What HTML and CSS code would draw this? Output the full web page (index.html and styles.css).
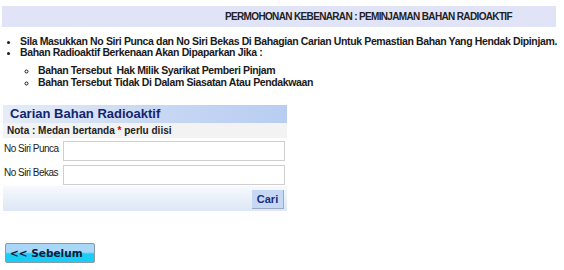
FILE: index.html
```html
<!DOCTYPE html>
<html lang="ms">
<head>
  <meta charset="UTF-8" />
  <title>Permohonan Kebenaran</title>
  <link rel="stylesheet" href="styles.css">
</head>
<body>

<div class="page-title">PERMOHONAN KEBENARAN : PEMINJAMAN BAHAN RADIOAKTIF</div>

<ul class="info">
  <li>Sila Masukkan No Siri Punca dan No Siri Bekas Di Bahagian Carian Untuk Pemastian Bahan Yang Hendak Dipinjam.</li>
  <li>Bahan Radioaktif Berkenaan Akan Dipaparkan Jika :
    <ul>
      <li>Bahan Tersebut&nbsp; Hak Milik Syarikat Pemberi Pinjam</li>
      <li>Bahan Tersebut Tidak Di Dalam Siasatan Atau Pendakwaan</li>
    </ul>
  </li>
</ul>

<div class="panel">
  <div class="panel-title">Carian Bahan Radioaktif</div>
  <div class="panel-note">Nota : Medan bertanda <span class="req">*</span> perlu diisi</div>
  <div class="field">
    <label for="punca">No Siri Punca</label>
    <input type="text" id="punca" />
  </div>
  <div class="field">
    <label for="bekas">No Siri Bekas</label>
    <input type="text" id="bekas" />
  </div>
  <div class="panel-foot">
    <button class="btn-cari">Cari</button>
  </div>
</div>

<button class="btn-back">&lt;&lt; Sebelum</button>

</body>
</html>
```

FILE: styles.css
```css
body {
  margin: 0;
  padding: 6px 8px 0 2px;
  background: #fff;
  color: #1a1a1a;
  font-family: 'Liberation Sans', Arial, sans-serif;
  font-size: 11px;
}
.page-title {
  width: 554px;
  height: 21px;
  line-height: 21px;
  padding-left: 223px;
  box-sizing: border-box;
  background: #e1e3f6;
  font-size: 10px;
  font-weight: bold;
  letter-spacing: -0.65px;
  color: #222;
  white-space: nowrap;
}
.info {
  margin: 9px 0 0 0;
  padding: 0 0 0 18px;
  font-size: 10.5px;
  font-weight: bold;
  letter-spacing: -0.37px;
  list-style: disc;
  white-space: nowrap;
}
.info li {
  line-height: 11px;
}
.info ul {
  margin: 6px 0 0 0;
  padding: 0 0 0 18px;
  list-style: circle;
}
.info ul li {
  line-height: 12px;
}
.panel {
  width: 284px;
  margin: 17px 0 0 1px;
  background: #fff;
}
.panel-title {
  height: 18px;
  line-height: 18px;
  padding-left: 7px;
  font-size: 13px;
  font-weight: bold;
  color: #15246e;
  background: linear-gradient(to right, #e6edf9, #c9d9f4 50%, #b8cdf1);
}
.panel-note {
  height: 15px;
  line-height: 15px;
  padding-left: 4px;
  background: #f3f3f3;
  font-weight: bold;
  font-size: 10px;
  color: #222;
}
.req {
  color: #e00;
}
.field {
  display: flex;
  align-items: flex-start;
  height: 24px;
  padding-top: 3px;
  box-sizing: border-box;
}
.field label {
  width: 59px;
  padding: 2px 0 0 1px;
  font-size: 10px;
  letter-spacing: -0.5px;
  color: #222;
  white-space: nowrap;
}
.field input {
  width: 222px;
  height: 20px;
  box-sizing: border-box;
  border: 1px solid #cfcfcf;
  margin: 0;
  padding: 1px 3px;
}
.panel-foot {
  display: flex;
  justify-content: flex-end;
  padding: 4px 3px 2px 0;
  background: linear-gradient(to bottom, #f7f9fd, #dde7f6);
}
.btn-cari {
  width: 32px;
  height: 19px;
  padding: 0;
  border: none;
  border-right: 1px solid #9aaac4;
  border-bottom: 1px solid #9aaac4;
  background: #c6d8f3;
  font-size: 11px;
  font-weight: bold;
  color: #1c2c7c;
}
.btn-back {
  display: block;
  margin: 32px 0 0 3px;
  width: 90px;
  height: 20px;
  padding: 0 0 0 4px;
  text-align: left;
  border: 1px solid #8a9aa8;
  border-radius: 2px;
  background: linear-gradient(to bottom, #a9d7f7 0%, #a9d7f7 45%, #19cdf6 55%, #19cdf6 100%);
  font-family: 'DejaVu Sans', Verdana, sans-serif;
  font-size: 10.5px;
  font-weight: bold;
  color: #0d1a3a;
}
```
